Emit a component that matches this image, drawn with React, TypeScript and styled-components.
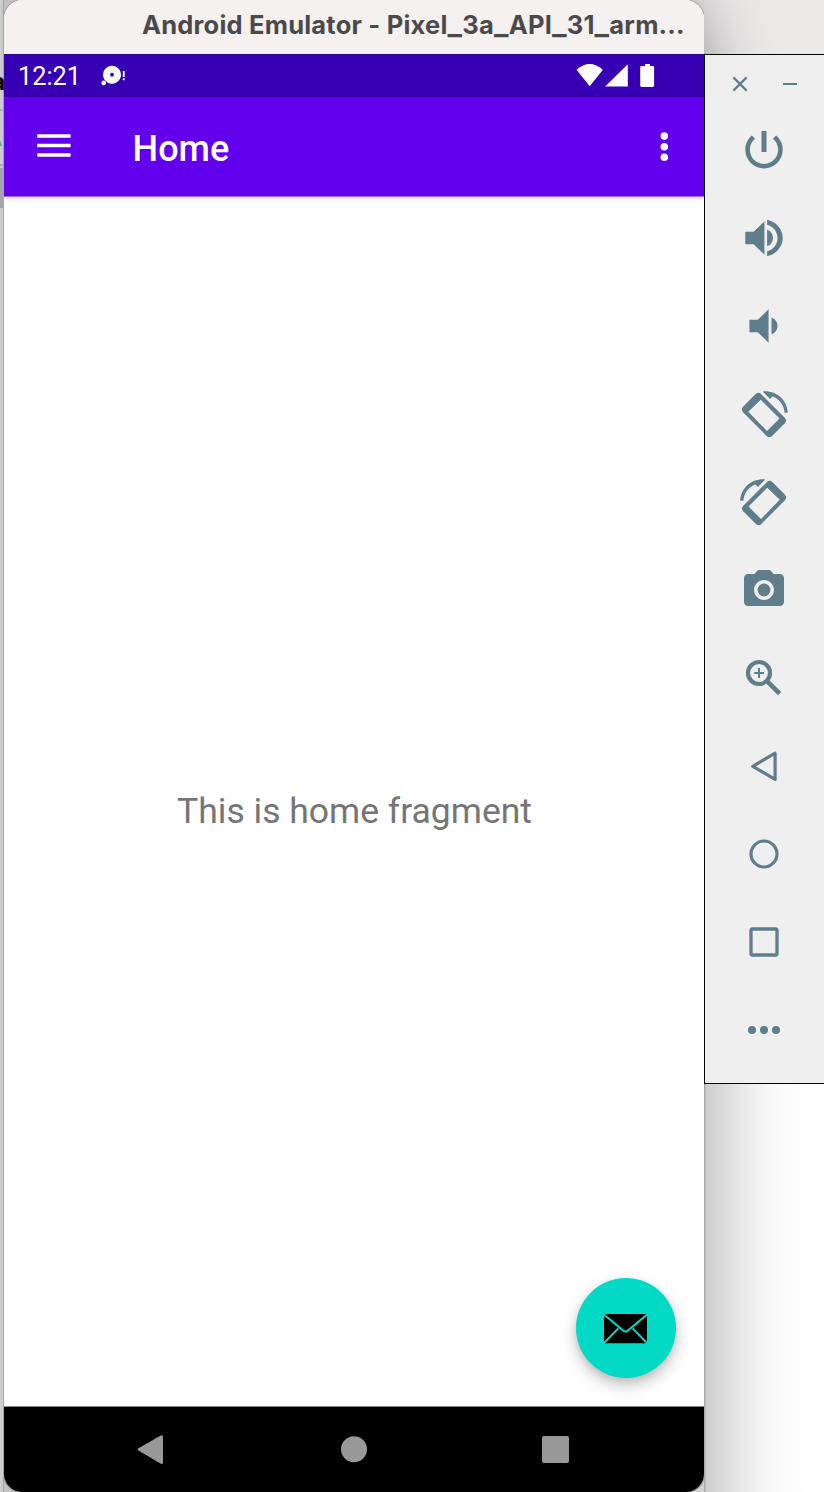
import React from "react";
import styled, { createGlobalStyle } from "styled-components";

const GlobalStyle = createGlobalStyle`
  * { box-sizing: border-box; }
  body { margin: 0; background: #fff; overflow: hidden; }
`;

const Desktop = styled.div`
  display: grid;
  grid-template-columns: 4px 700px 120px;
  width: 824px;
  height: 1492px;
  overflow: hidden;
  background: #fff;
`;

const BackdropStrip = styled.div`
  position: relative;
  z-index: 1;
  display: flex;
  flex-direction: column;
  overflow: hidden;
  background: linear-gradient(90deg, #d2d1d1, #c6c5c5 3px, #a9a9a9 3px);
`;

const StripBlock = styled.div<{ $height: number; $color?: string }>`
  flex: none;
  width: 3px;
  height: ${(p) => p.$height}px;
  background: ${(p) => p.$color ?? "transparent"};
`;

const StripWedge = styled(StripBlock)`
  clip-path: polygon(0 0, 70% 100%, 0 100%);
`;

const StripLabel = styled.div`
  flex: none;
  height: 54px;
  margin-right: -1px;
  display: flex;
  justify-content: flex-end;
  font: 700 23px/54px Inter, sans-serif;
  color: #000;
`;

const WindowBackdrop = styled.div`
  background: linear-gradient(90deg, #c2c1c1 50%, #cfcfcf 50%);
`;

const EmulatorWindow = styled.div`
  height: 1492px;
  display: flex;
  flex-direction: column;
  border-radius: 19px 19px 18px 18px;
  overflow: hidden;
  background: #fff;
  box-shadow: 0 0 0 1px #a3a2a2;
`;

const TitleBar = styled.div`
  flex: none;
  height: 54px;
  background: #f6f1f1;
  padding-left: 138px;
  font: 700 25.5px/50px Inter, sans-serif;
  letter-spacing: 0.2px;
  color: #4b4a4a;
  white-space: nowrap;
`;

const WideUnderscore = styled.span`
  font-size: 31px;
  font-weight: 600;
  line-height: 0;
`;

const StatusBar = styled.div`
  flex: none;
  height: 43px;
  display: flex;
  justify-content: space-between;
  background: #3700b3;
  border-top: 1px solid #2a0092;
`;

const StatusGroup = styled.div`
  display: flex;
`;

const Clock = styled.div`
  width: 92px;
  padding-left: 14px;
  font: 400 25.3px/44px Roboto, sans-serif;
  color: #fff;
`;

const AppBar = styled.div`
  position: relative;
  flex: none;
  height: 100px;
  display: flex;
  align-items: flex-start;
  background: #6200ee;
  border-bottom: 1px solid #a36bf2;
  box-shadow: 0 1px 5px rgba(0, 0, 0, 0.2);
`;

const AppTitle = styled.h1`
  flex: 1;
  margin: 0;
  padding-left: 28.6px;
  font: 500 36px/105px Roboto, sans-serif;
  color: #fff;
`;

const Content = styled.main`
  position: relative;
  flex: 1;
  display: flex;
  align-items: center;
  justify-content: center;
  padding: 19px 0 0 1px;
  border-bottom: 1px solid #868686;
  font: 400 35.5px/42px Roboto, sans-serif;
  color: #757575;
`;

const ComposeButton = styled.button`
  position: absolute;
  right: 28px;
  bottom: 28px;
  width: 100px;
  height: 100px;
  padding: 0;
  border: 0;
  border-radius: 50%;
  background: #03dac5;
  box-shadow: 0 7px 15px rgba(0, 0, 0, 0.24), 0 2px 6px rgba(0, 0, 0, 0.08);
`;

const NavBar = styled.nav`
  flex: none;
  height: 85px;
  display: flex;
  justify-content: space-between;
  padding: 0 109px;
  background: #000;
  fill: #999;
`;

const SideColumn = styled.div`
  display: flex;
  flex-direction: column;
`;

const TopShade = styled.div`
  height: 54px;
  background:
    linear-gradient(180deg, rgba(236, 233, 233, 0.55), rgba(236, 233, 233, 0)),
    linear-gradient(90deg, #bdbbbb, #cfcdcd 15px, #dddbdb 32px, #e7e4e4 52px, #ece9e9 80px);
`;

const ToolPanel = styled.aside`
  flex: none;
  height: 1030px;
  border: 1px solid #000;
  border-right: 0;
  background: #efefef;
`;

const PanelControls = styled.div`
  height: 51px;
`;

const ToolList = styled.div`
  display: flex;
  flex-direction: column;
  padding-left: 15px;
`;

const ToolGlyph = styled.svg`
  display: block;
  width: 88px;
  height: 88px;
  fill: #607d8b;
`;

const BottomShade = styled.div`
  flex: 1;
  background: linear-gradient(90deg, #a9a9a9 1px, #cecece 2px, #d8d8d8 16px, #e8e8e8 36px, #f5f5f5 60px, #fcfcfc 82px, #fff 105px);
`;

const Outline = styled.g`
  fill: none;
  stroke: #607d8b;
`;

/* Material glyphs drawn on a 24-unit grid and centred in an 88px cell. */
const Material = ({ d, scale = 2.08, y = 44 }: { d: string; scale?: number; y?: number }) => (
  <path d={d} transform={`translate(${44 - 12 * scale} ${y - 12 * scale}) scale(${scale})`} />
);

const Rotation = () => (
  <>
    <path
      fillRule="evenodd"
      d="M36.1 23.6Q38.3 21.8 40.5 23.6L65 48.1Q67 50.6 65 53L51.5 66.4Q49.3 68 47.1 66.4L22.8 42Q21 39.5 22.8 37.1ZM40.8 29.7L28.3 41.8L47 61L59.5 48.5Z"
    />
    <path d="M42.7 21.4C56 20.2 67 29.5 67.8 42.8H64.6C64 35 59.5 29.2 52.7 26.3L50 29Z" />
  </>
);

const tools: { name: string; glyph: React.ReactNode }[] = [
  {
    name: "Power",
    glyph: (
      <Material
        y={43.8}
        d="M13.2 3h-2.4v10h2.4V3zm4.63 2.17l-1.55 1.55C17.86 7.99 18.8 9.81 18.8 12c0 3.75-3.05 6.8-6.8 6.8s-6.8-3.05-6.8-6.8c0-2.19.94-4.01 2.51-5.29L6.17 5.17C4.23 6.82 3 9.26 3 12c0 4.97 4.03 9 9 9s9-4.03 9-9c0-2.74-1.23-5.18-3.17-6.83z"
      />
    ),
  },
  {
    name: "Volume up",
    glyph: (
      <Material d="M3 9v6h4l5.2 5V4L7 9H3zm13.3 3c0-1.77-1.02-3.29-2.8-4.03v8.05c1.78-.73 2.8-2.25 2.8-4.02zM13.5 3.23v2.36c2.99.86 5 3.24 5 6.41s-2.01 5.55-5 6.41v2.36c4.31-.91 7.5-4.49 7.5-8.77s-3.19-7.86-7.5-8.77z" />
    ),
  },
  {
    name: "Volume down",
    glyph: (
      <Material d="M18.5 12c0-1.77-1.02-3.29-2.9-4.03v8.05c1.88-.73 2.9-2.25 2.9-4.02zM5 9v6h4l5.2 5V4L9 9H5z" />
    ),
  },
  { name: "Rotate left", glyph: <Rotation /> },
  {
    name: "Rotate right",
    glyph: (
      <g transform="translate(88 0) scale(-1 1)">
        <Rotation />
      </g>
    ),
  },
  {
    name: "Take screenshot",
    glyph: (
      <>
        <Material
          scale={2}
          d="M9 2L7.17 4H4c-1.1 0-2 .9-2 2v12c0 1.1.9 2 2 2h16c1.1 0 2-.9 2-2V6c0-1.1-.9-2-2-2h-3.17L15 2H9zm3 15c-2.76 0-5-2.24-5-5s2.24-5 5-5 5 2.24 5 5-2.24 5-5 5z"
        />
        <circle cx="44" cy="44" r="6.4" />
      </>
    ),
  },
  {
    name: "Zoom",
    glyph: (
      <Outline>
        <circle cx="39" cy="39" r="11" strokeWidth="4.2" />
        <path d="M34.2 39h9.8M39 34.1v9.8" strokeWidth="2" />
        <path d="M47.8 47.8L59.6 59.6" strokeWidth="4.6" />
      </Outline>
    ),
  },
  {
    name: "Back",
    glyph: (
      <Outline>
        <path d="M55.1 31.2V57.4L32.8 44.3Z" strokeWidth="3.2" strokeLinejoin="round" />
      </Outline>
    ),
  },
  {
    name: "Home",
    glyph: (
      <Outline>
        <circle cx="44" cy="44" r="13" strokeWidth="3.2" />
      </Outline>
    ),
  },
  {
    name: "Overview",
    glyph: (
      <Outline>
        <rect x="31" y="31" width="26" height="26" rx="1.5" strokeWidth="3.3" />
      </Outline>
    ),
  },
  {
    name: "More",
    glyph: (
      <>
        <circle cx="32" cy="44" r="4" />
        <circle cx="44" cy="44" r="4" />
        <circle cx="56" cy="44" r="4" />
      </>
    ),
  },
];

export default function App() {
  return (
    <>
      <GlobalStyle />
      <Desktop>
        <BackdropStrip>
          <StripBlock $height={55} />
          <StripLabel>a</StripLabel>
          <StripBlock $height={2} $color="#aaa" />
          <StripBlock $height={29} />
          <StripWedge $height={6} $color="#45b98a" />
          <StripBlock $height={18} />
          <StripBlock $height={2} $color="#aaa" />
          <StripBlock $height={2} />
          <StripBlock $height={40} $color="#a6a5a5" />
        </BackdropStrip>

        <WindowBackdrop>
          <EmulatorWindow>
            <TitleBar>
              Android Emulator - Pixel<WideUnderscore>_</WideUnderscore>3a
              <WideUnderscore>_</WideUnderscore>API<WideUnderscore>_</WideUnderscore>31
              <WideUnderscore>_</WideUnderscore>arm...
            </TitleBar>
            <StatusBar>
              <StatusGroup>
                <Clock>12:21</Clock>
                <svg width="32" height="42" viewBox="96 55 32 42" fill="#fff">
                  <path
                    fillRule="evenodd"
                    d="M112 65.7a9 9 0 1 0 .01 0ZM112 72.8a1.9 1.9 0 1 1-.01 0Z"
                  />
                  <circle cx="103.7" cy="82.9" r="2.3" />
                  <path d="M122.8 71h1.9v6h-1.9zM122.8 78.3h1.9v1.9h-1.9z" />
                </svg>
              </StatusGroup>
              <svg width="134" height="42" viewBox="570 55 134 42" fill="#fff">
                <path d="M576.5 69.8Q589.6 58.2 602.9 69.8L589.7 86.3Z" />
                <path d="M627.8 64.2V86.4H605.2Z" />
                <path d="M645 64h5v2h2.8q1.3 0 1.3 1.3v18.3q0 1.3-1.3 1.3h-11.3q-1.3 0-1.3-1.3v-18.3q0-1.3 1.3-1.3h3.5z" />
              </svg>
            </StatusBar>
            <AppBar>
              <svg width="100" height="99" viewBox="4 97 100 99" fill="#fff">
                <path d="M37.2 134.2h33.4v3.5H37.2zM37.2 143.8h33.4v3.4H37.2zM37.2 153.2h33.4v3.5H37.2z" />
              </svg>
              <AppTitle>Home</AppTitle>
              <svg width="80" height="99" viewBox="624 97 80 99" fill="#fff">
                <circle cx="664.3" cy="136.1" r="3.8" />
                <circle cx="664.3" cy="146.7" r="3.8" />
                <circle cx="664.3" cy="157.2" r="3.8" />
              </svg>
            </AppBar>
            <Content>
              This is home fragment
              <ComposeButton aria-label="Compose">
                <svg width="100" height="100" viewBox="576 1278 100 100">
                  <rect x="604" y="1314" width="43" height="29.3" rx="1.5" />
                  <path
                    d="M603 1313.8L622.8 1330.2Q625.5 1332.8 628.2 1330.2L648 1313.8M603.8 1343.3L618.3 1328.4M647.2 1343.3L632.7 1328.4"
                    fill="none"
                    stroke="#03dac5"
                    strokeWidth="2"
                  />
                </svg>
              </ComposeButton>
            </Content>
            <NavBar>
              <svg width="78" height="85" viewBox="113 1407 78 85">
                <path d="M138.5 1448.2L160.8 1435.4Q163 1434.6 163 1436.8V1462.4Q163 1464.6 160.8 1463.8L138.5 1450.5Q136.8 1449.3 138.5 1448.2Z" />
              </svg>
              <svg width="78" height="85" viewBox="315 1407 78 85">
                <circle cx="354" cy="1449.2" r="13" />
              </svg>
              <svg width="78" height="85" viewBox="517 1407 78 85">
                <rect x="542" y="1436" width="27" height="27" rx="2" />
              </svg>
            </NavBar>
          </EmulatorWindow>
        </WindowBackdrop>

        <SideColumn>
          <TopShade />
          <ToolPanel>
            <PanelControls>
              <svg width="119" height="51" viewBox="705 55 119 51" stroke="#607d8b" strokeWidth="2.2">
                <path d="M733.4 77.4L746.6 90.6M746.6 77.4L733.4 90.6M783 84H797" />
              </svg>
            </PanelControls>
            <ToolList>
              {tools.map((tool) => (
                <ToolGlyph key={tool.name} viewBox="0 0 88 88" role="img" aria-label={tool.name}>
                  {tool.glyph}
                </ToolGlyph>
              ))}
            </ToolList>
          </ToolPanel>
          <BottomShade />
        </SideColumn>
      </Desktop>
    </>
  );
}
